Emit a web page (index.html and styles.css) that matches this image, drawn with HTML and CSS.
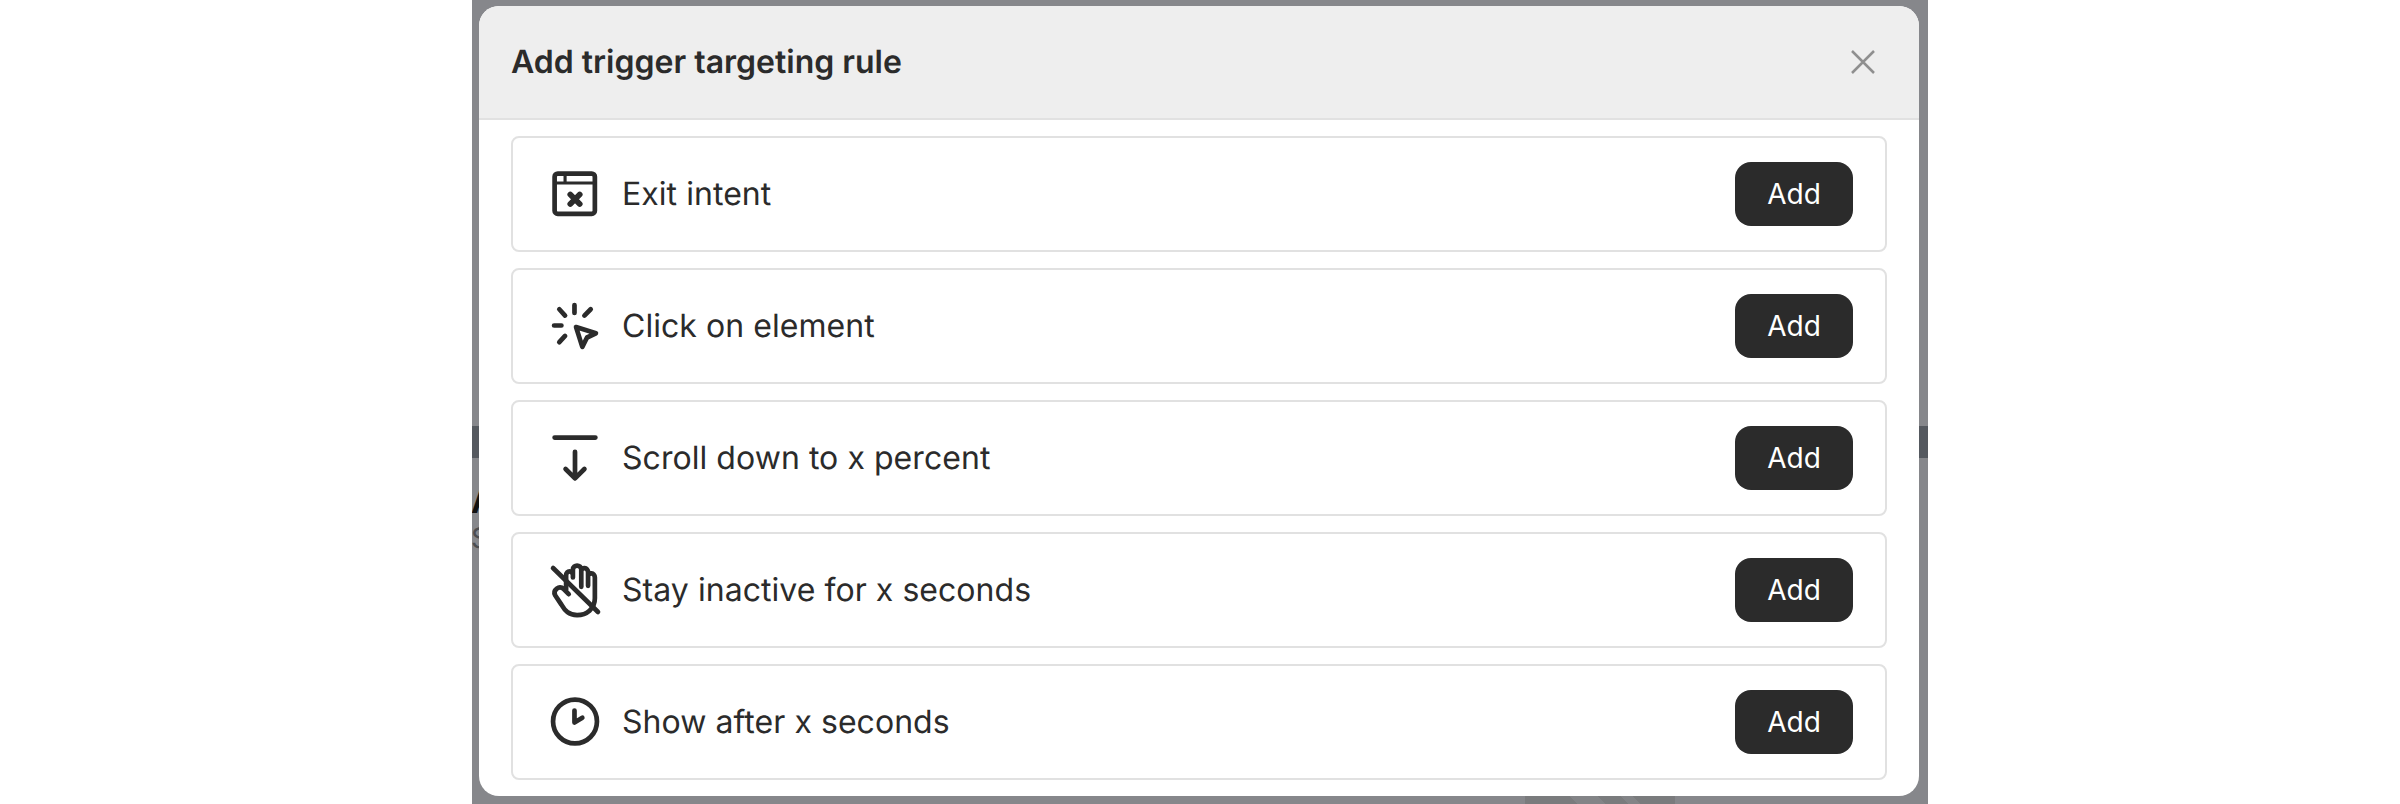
FILE: index.html
```html
<!DOCTYPE html>
<html lang="en">
  <head>
    <meta charset="UTF-8" />
    <title>Add trigger targeting rule</title>
    <link rel="stylesheet" href="styles.css">
  </head>
  <body>
    <div class="backdrop">
      <div class="behind-strip"></div>
      <div class="behind-title">A</div>
      <div class="behind-sub">S</div>
      <div class="behind-image"></div>
      <section class="modal">
        <header class="modal-header">
          <h2>Add trigger targeting rule</h2>
          <button class="close" aria-label="Close">
            <svg viewBox="0 0 24 24" width="24" height="24">
              <path d="M1 1 23 23M23 1 1 23" />
            </svg>
          </button>
        </header>
        <div class="rules">
          <div class="rule">
            <svg class="rule-icon" viewBox="0 0 44 44">
              <rect x="2.500" y="2.500" width="38.500" height="38.500" rx="3" />
              <path class="thin" d="M2.500 11.500H41M12.500 2.500V11.500" />
              <path class="heavy" d="M17.500 22.500 26.500 31.500M26.500 22.500 17.500 31.500" />
            </svg>
            <span class="rule-name">Exit intent</span>
            <button class="add">Add</button>
          </div>
          <div class="rule">
            <svg class="rule-icon" viewBox="0 0 44 44">
              <path d="M21.500 2V9.500M7 6 12.500 12M37 6 31 12M2 21.500H9M7 37.500 12.500 31.500" />
              <path d="M23 23 42 29 33.500 33 29 42Z" />
            </svg>
            <span class="rule-name">Click on element</span>
            <button class="add">Add</button>
          </div>
          <div class="rule">
            <svg class="rule-icon" viewBox="0 0 44 44">
              <path d="M2.500 2.500H41.500M22 16V41M13 32.500 22 41.500 31 32.500" />
            </svg>
            <span class="rule-name">Scroll down to x percent</span>
            <button class="add">Add</button>
          </div>
          <div class="rule">
            <svg class="rule-icon" viewBox="0 0 44 44">
              <path d="M1 1 44 43" />
              <path d="M13.500 23V8C13.500 3 20 3 20 8M20 10V2.500C20 -2.500 28 -2.500 28 2.500V19M28 4C28 0 34.500 0 34.500 5V18M34.500 9C34.500 5 41 5 41 10V30C41 40 33 46 24 46 16 46 12.500 42 9 36L3 27C0.500 22 7 17 11 21L16 26" />
            </svg>
            <span class="rule-name">Stay inactive for x seconds</span>
            <button class="add">Add</button>
          </div>
          <div class="rule">
            <svg class="rule-icon" viewBox="0 0 44 44">
              <circle cx="22" cy="21.500" r="21" />
              <path d="M21.500 11V22.500L29 18" />
            </svg>
            <span class="rule-name">Show after x seconds</span>
            <button class="add">Add</button>
          </div>
        </div>
      </section>
    </div>
  </body>
</html>
```

FILE: styles.css
```css
html,
body {
  height: 100%;
}
body {
  margin: 0;
  background-color: white;
  font-family: "Inter", "Liberation Sans", sans-serif;
  color: #2b2b2b;
  display: flex;
  justify-content: center;
  overflow: hidden;
  text-rendering: geometricPrecision;
}
.backdrop {
  position: relative;
  width: 1456px;
  height: 804px;
  box-sizing: border-box;
  padding: 6px 9px 8px 7px;
  background-color: #86878b;
  overflow: hidden;
}
.behind-strip {
  position: absolute;
  left: 0;
  right: 0;
  top: 426px;
  height: 32px;
  background-color: #55595f;
}
.behind-title {
  position: absolute;
  left: -1px;
  top: 482px;
  font-size: 32px;
  font-weight: 700;
  color: #111;
}
.behind-sub {
  position: absolute;
  left: -1px;
  top: 521px;
  font-size: 28px;
  color: #4c4d50;
}
.behind-image {
  position: absolute;
  left: 1053px;
  top: 790px;
  width: 150px;
  height: 14px;
  background: linear-gradient(
    45deg,
    #7a7b7d 37px,
    #838487 37px,
    #838487 57px,
    #7a7b7d 57px,
    #7a7b7d 73px,
    #838487 73px,
    #838487 82px,
    #7a7b7d 82px
  );
}
.modal {
  position: relative;
  height: 100%;
  background-color: white;
  border-radius: 20px;
  overflow: hidden;
}
.modal-header {
  display: flex;
  align-items: center;
  justify-content: space-between;
  height: 112px;
  padding: 0 32px;
  background-color: #eeeeee;
  border-bottom: 2px solid #e1e1e1;
}
.modal-header h2 {
  margin: 0 0 2px;
  font-size: 32px;
  font-weight: 600;
}
.close {
  display: flex;
  padding: 0;
  margin-right: 12px;
  background: transparent;
  border: none;
}
.close svg {
  fill: none;
  stroke: #8f8f8f;
  stroke-width: 2.500;
}
.rules {
  display: flex;
  flex-direction: column;
  gap: 16px;
  padding: 16px 32px 0;
}
.rule {
  display: flex;
  align-items: center;
  gap: 24px;
  height: 116px;
  box-sizing: border-box;
  padding: 0 32px 0 39px;
  border: 2px solid #e1e1e1;
  border-radius: 8px;
}
.rule-icon {
  width: 46px;
  height: 46px;
  flex: none;
  fill: none;
  overflow: visible;
  stroke: #2b2b2b;
  stroke-width: 4.500;
  stroke-linecap: round;
  stroke-linejoin: round;
}
.thin {
  stroke-width: 3;
}
.heavy {
  stroke-width: 5.500;
}
.rule-name {
  flex: 1;
  font-size: 32px;
  line-height: 40px;
  padding-bottom: 1px;
  letter-spacing: 0.05px;
}
.add {
  width: 118px;
  height: 64px;
  padding: 0;
  font-family: inherit;
  font-size: 28px;
  color: white;
  background-color: #2b2b2b;
  border: none;
  border-radius: 16px;
}
```
